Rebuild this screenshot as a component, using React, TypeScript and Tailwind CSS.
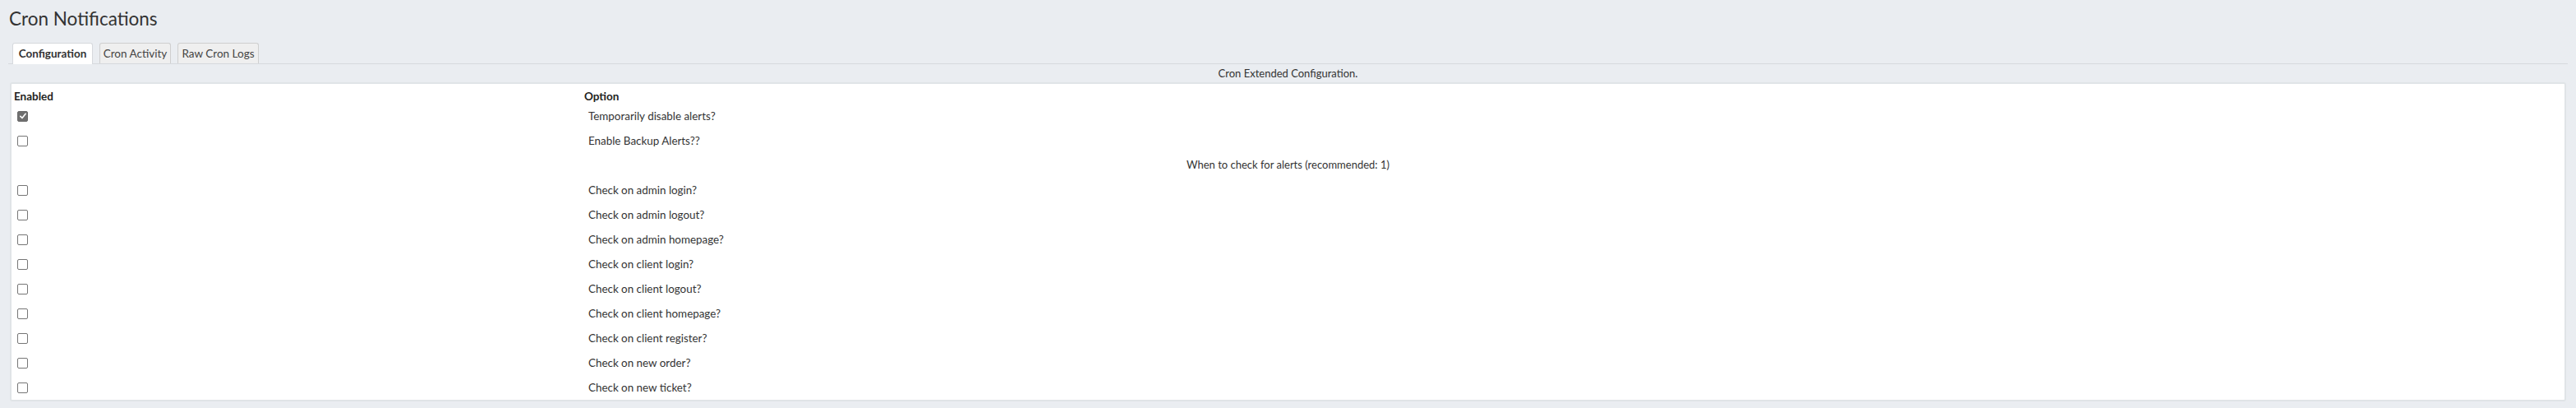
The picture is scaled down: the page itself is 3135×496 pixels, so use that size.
const options = [
  'Check on admin login?',
  'Check on admin logout?',
  'Check on admin homepage?',
  'Check on client login?',
  'Check on client logout?',
  'Check on client homepage?',
  'Check on client register?',
  'Check on new order?',
  'Check on new ticket?',
];

const Checkbox = ({ checked }: { checked?: boolean }) =>
  checked ? (
    <span className="flex h-[13px] w-[13px] items-center justify-center rounded-[2px] border border-[#6a6a6a] bg-[#6f6f6f]">
      <svg viewBox="0 0 12 12" className="h-[10px] w-[10px]">
        <path d="M2.2 6.4 4.8 9 9.8 2.8" fill="none" stroke="#fff" strokeWidth="2" strokeLinecap="round" strokeLinejoin="round" />
      </svg>
    </span>
  ) : (
    <span className="block h-[13px] w-[13px] rounded-[2px] border border-[#767676] bg-white"></span>
  );

const Row = ({ label, checked }: { label: string; checked?: boolean }) => (
  <div className="flex h-[30px] items-center">
    <div className="w-[694px] pl-[7px]">
      <Checkbox checked={checked} />
    </div>
    <div className="pl-[8px] text-[13.4px] text-[#333]">{label}</div>
  </div>
);

export default function App() {
  return (
    <div className="min-h-[496px] bg-[#eaedf1] px-[10px] pt-[8px] font-['Lato',sans-serif] text-[#333]">
      <h1 className="h-[38px] pl-[1px] text-[22.5px] leading-[30px] text-[#333]">Cron Notifications</h1>

      <div className="flex gap-[8px] border-b border-[#d6d9dd] pl-[5px] pt-[6px]">
        <div className="-mb-px h-[26px] w-[98px] rounded-t-[3px] border border-b-0 border-[#d6d9dd] bg-white text-center text-[13.5px] font-bold leading-[24px] text-[#333]">
          Configuration
        </div>
        <div className="h-[25px] w-[87px] rounded-t-[3px] border border-b-0 border-[#cfcfcf] bg-[#efefef] text-center text-[13.5px] leading-[24px] text-[#444]">
          Cron Activity
        </div>
        <div className="h-[25px] w-[99px] rounded-t-[3px] border border-b-0 border-[#cfcfcf] bg-[#efefef] text-center text-[13.5px] leading-[24px] text-[#444]">
          Raw Cron Logs
        </div>
      </div>

      <div className="h-[22px] text-center text-[13px] leading-[23px] text-[#333]">Cron Extended Configuration.</div>

      <div className="mx-[2px] rounded-[3px] border-2 border-[#e0e4e7] bg-white">
        <div className="flex h-[24px] pt-[5px] text-[13.5px] font-bold leading-[20px] text-[#222]">
          <div className="w-[694px] pl-[3px]">Enabled</div>
          <div className="pl-[3px]">Option</div>
        </div>
        <Row label="Temporarily disable alerts?" checked />
        <Row label="Enable Backup Alerts??" />
        <div className="flex h-[30px] items-center justify-center text-[13px] text-[#333]">
          When to check for alerts (recommended: 1)
        </div>
        {options.map((o) => (
          <Row key={o} label={o} />
        ))}
      </div>
    </div>
  );
}
